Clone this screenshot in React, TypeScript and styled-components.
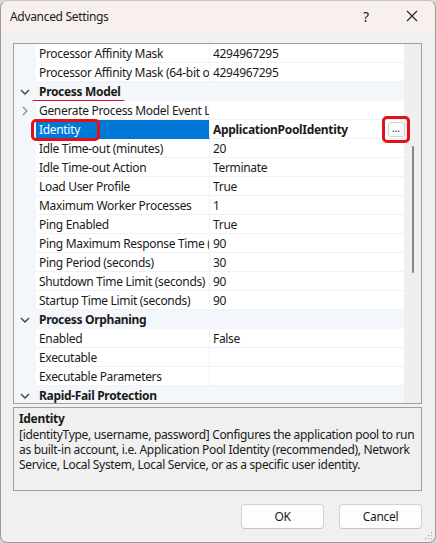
import React from 'react';
import styled, { createGlobalStyle } from 'styled-components';

type Row =
  | { kind: 'category'; name: string; mark?: boolean }
  | { kind: 'prop'; name: string; value?: string; expandable?: boolean; selected?: boolean };

const rows: Row[] = [
  { kind: 'prop', name: 'Processor Affinity Mask', value: '4294967295' },
  { kind: 'prop', name: 'Processor Affinity Mask (64-bit option)', value: '4294967295' },
  { kind: 'category', name: 'Process Model', mark: true },
  { kind: 'prop', name: 'Generate Process Model Event Log Entry', expandable: true },
  { kind: 'prop', name: 'Identity', value: 'ApplicationPoolIdentity', selected: true },
  { kind: 'prop', name: 'Idle Time-out (minutes)', value: '20' },
  { kind: 'prop', name: 'Idle Time-out Action', value: 'Terminate' },
  { kind: 'prop', name: 'Load User Profile', value: 'True' },
  { kind: 'prop', name: 'Maximum Worker Processes', value: '1' },
  { kind: 'prop', name: 'Ping Enabled', value: 'True' },
  { kind: 'prop', name: 'Ping Maximum Response Time (seconds)', value: '90' },
  { kind: 'prop', name: 'Ping Period (seconds)', value: '30' },
  { kind: 'prop', name: 'Shutdown Time Limit (seconds)', value: '90' },
  { kind: 'prop', name: 'Startup Time Limit (seconds)', value: '90' },
  { kind: 'category', name: 'Process Orphaning' },
  { kind: 'prop', name: 'Enabled', value: 'False' },
  { kind: 'prop', name: 'Executable', value: '' },
  { kind: 'prop', name: 'Executable Parameters', value: '' },
  { kind: 'category', name: 'Rapid-Fail Protection' },
];

const GlobalStyle = createGlobalStyle`
  html, body {
    margin: 0;
    padding: 0;
    background: #d9d9d9;
  }
  * { box-sizing: border-box; }
`;

const Window = styled.div`
  width: 436px;
  height: 543px;
  background: #f0f0f0;
  border: 1px solid #9a9a9a;
  border-top-color: #c8c4c2;
  border-radius: 8px 8px 7px 7px;
  overflow: hidden;
  display: flex;
  flex-direction: column;
  font-family: 'Noto Sans', 'Open Sans', sans-serif;
  font-size: 12px;
  letter-spacing: -0.32px;
  color: #1a1a1a;
  position: relative;
`;

const TitleBar = styled.div`
  height: 30px;
  flex: none;
  background: #f7f0ed;
  display: flex;
  align-items: center;
  padding-left: 9px;
`;

const Title = styled.div`
  flex: 1;
  font-size: 12px;
  color: #1b1b1b;
  margin-top: 1px;
`;

const TitleButton = styled.div<{ $w: number }>`
  width: ${(p) => p.$w}px;
  height: 30px;
  display: flex;
  align-items: center;
  justify-content: center;
  font-size: 14px;
  color: #222;
`;

const Body = styled.div`
  flex: 1;
  display: flex;
  flex-direction: column;
  padding: 12px 13px 0 12px;
`;

const Grid = styled.div`
  height: 361px;
  border: 1px solid #a0a0a0;
  background: #ffffff;
  display: flex;
  overflow: hidden;
  position: relative;
`;

const RowList = styled.div`
  flex: 1;
  display: flex;
  flex-direction: column;
`;

const GridRow = styled.div<{ $category?: boolean }>`
  height: 19px;
  flex: none;
  display: flex;
  position: relative;
  background: ${(p) => (p.$category ? '#f3f6fb' : '#ffffff')};
  font-weight: ${(p) => (p.$category ? 700 : 400)};
`;

const Margin = styled.div`
  width: 22px;
  flex: none;
  background: #f3f6fb;
  display: flex;
  align-items: center;
  justify-content: center;
`;

const NameCell = styled.div<{ $selected?: boolean }>`
  width: 174px;
  flex: none;
  padding: 1px 0 0 3px;
  line-height: 17px;
  white-space: nowrap;
  overflow: hidden;
  background: ${(p) => (p.$selected ? '#0078d7' : 'transparent')};
  color: ${(p) => (p.$selected ? '#ffffff' : '#1a1a1a')};
  border-bottom: 1px solid ${(p) => (p.$selected ? '#0078d7' : '#f0f2f5')};
  border-right: 1px solid #f0f2f5;
`;

const ValueCell = styled.div<{ $bold?: boolean }>`
  flex: 1;
  padding: 1px 0 0 3px;
  line-height: 17px;
  white-space: nowrap;
  overflow: hidden;
  font-weight: ${(p) => (p.$bold ? 700 : 400)};
  border-bottom: 1px solid #f0f2f5;
`;

const CategoryLabel = styled.div`
  padding: 1px 0 0 3px;
  line-height: 18px;
  position: relative;
`;

const Underline = styled.div`
  position: absolute;
  left: -4px;
  right: -4px;
  bottom: -2px;
  height: 3px;
  border-radius: 2px;
  background: #e3101a;
`;

const MarkBox = styled.div`
  position: absolute;
  left: 17px;
  top: -1px;
  width: 69px;
  height: 22px;
  border: 3px solid #e3101a;
  border-radius: 5px;
  z-index: 2;
`;

const EllipsisMark = styled.div`
  position: absolute;
  right: -6px;
  top: -4px;
  width: 28px;
  height: 27px;
  border: 3px solid #e3101a;
  border-radius: 5px;
  display: flex;
  align-items: center;
  justify-content: center;
  z-index: 3;
`;

const Ellipsis = styled.div`
  width: 17px;
  height: 15px;
  border: 1px solid #cfcfcf;
  border-radius: 3px;
  background: #fbfbfb;
  font-size: 10px;
  line-height: 10px;
  font-weight: 400;
  letter-spacing: 0;
  text-align: center;
  color: #222;
`;

const Scrollbar = styled.div`
  width: 17px;
  flex: none;
  background: #efefef;
  display: flex;
  justify-content: center;
  padding-top: 102px;
`;

const Thumb = styled.div`
  width: 2px;
  height: 127px;
  margin-left: 1px;
  border-radius: 1px;
  background: #858585;
`;

const Description = styled.div`
  margin-top: 3px;
  height: 84px;
  border: 1px solid #a0a0a0;
  padding: 3px 5px;
  background: #f0f0f0;
`;

const DescTitle = styled.div`
  font-weight: 700;
  line-height: 16px;
`;

const DescText = styled.div`
  line-height: 15px;
`;

const Footer = styled.div`
  display: flex;
  justify-content: flex-end;
  gap: 15px;
  padding-top: 13px;
`;

const Button = styled.div`
  width: 83px;
  height: 25px;
  border: 1px solid #d2d2d2;
  border-bottom-color: #c4c4c4;
  border-radius: 4px;
  background: #fdfdfd;
  display: flex;
  align-items: center;
  justify-content: center;
  color: #1a1a1a;
`;

const Grip = styled.svg`
  position: absolute;
  right: 2px;
  bottom: 2px;
`;

const ChevronDown = () => (
  <svg width="10" height="6" viewBox="0 0 10 6">
    <path d="M1 1 L5 5 L9 1" fill="none" stroke="#3c3c3c" strokeWidth="1.3" />
  </svg>
);

const ChevronRight = () => (
  <svg width="6" height="10" viewBox="0 0 6 10">
    <path d="M1 1 L5 5 L1 9" fill="none" stroke="#8a8a8a" strokeWidth="1.2" />
  </svg>
);

const App: React.FC = () => {
  return (
    <>
      <GlobalStyle />
      <Window>
        <TitleBar>
          <Title>Advanced Settings</Title>
          <TitleButton $w={46}>?</TitleButton>
          <TitleButton $w={46}>
            <svg width="12" height="12" viewBox="0 0 12 12">
              <path d="M1 1 L11 11 M11 1 L1 11" stroke="#222" strokeWidth="1.1" />
            </svg>
          </TitleButton>
        </TitleBar>
        <Body>
          <Grid>
            <RowList>
              {rows.map((row, idx) =>
                row.kind === 'category' ? (
                  <GridRow key={idx} $category>
                    <Margin>
                      <ChevronDown />
                    </Margin>
                    <CategoryLabel>
                      {row.name}
                      {row.mark && <Underline />}
                    </CategoryLabel>
                  </GridRow>
                ) : (
                  <GridRow key={idx}>
                    <Margin>{row.expandable && <ChevronRight />}</Margin>
                    <NameCell $selected={row.selected}>{row.name}</NameCell>
                    <ValueCell $bold={row.selected}>{row.value}</ValueCell>
                    {row.selected && (
                      <>
                        <MarkBox />
                        <EllipsisMark>
                          <Ellipsis>...</Ellipsis>
                        </EllipsisMark>
                      </>
                    )}
                  </GridRow>
                )
              )}
            </RowList>
            <Scrollbar>
              <Thumb />
            </Scrollbar>
          </Grid>
          <Description>
            <DescTitle>Identity</DescTitle>
            <DescText>
              [identityType, username, password] Configures the application pool to run as
              built-in account, i.e. Application Pool Identity (recommended), Network Service,
              Local System, Local Service, or as a specific user identity.
            </DescText>
          </Description>
          <Footer>
            <Button>OK</Button>
            <Button>Cancel</Button>
          </Footer>
        </Body>
        <Grip width="10" height="10" viewBox="0 0 10 10">
          {[
            [8, 2],
            [8, 5],
            [5, 5],
            [8, 8],
            [5, 8],
            [2, 8],
          ].map(([x, y]) => (
            <rect key={`${x}-${y}`} x={x} y={y} width="1.2" height="1.2" fill="#a8a8a8" />
          ))}
        </Grip>
      </Window>
    </>
  );
};

export default App;
